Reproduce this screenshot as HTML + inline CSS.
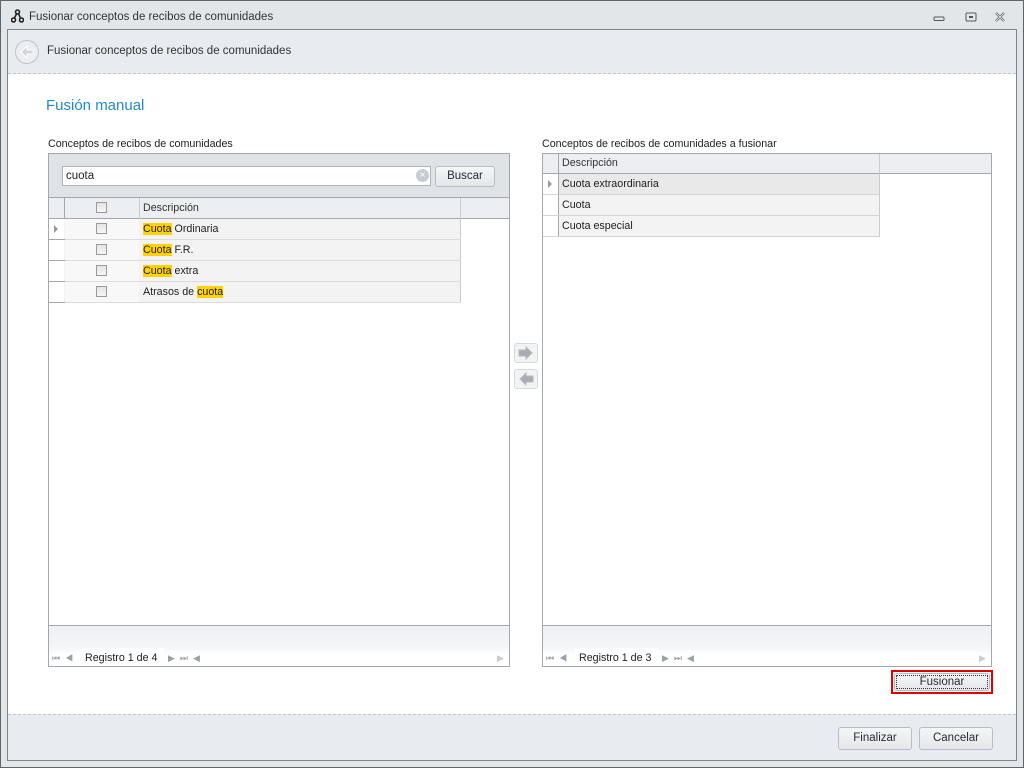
<!DOCTYPE html>
<html><head><meta charset="utf-8"><style>
*{margin:0;padding:0;box-sizing:border-box}
body{width:1024px;height:768px;position:relative;overflow:hidden;background:#e3e6e9;font-family:"Liberation Sans",sans-serif;font-size:10.7px;color:#1e1e1e}
.a{position:absolute}
.t{white-space:nowrap}
.hl{background:#ffd200}
.cb{position:absolute;width:11px;height:11px;border:1px solid #9a9a9a;background:linear-gradient(#e4e4e4,#f6f6f6)}
.btn{position:absolute;border:1px solid #b9bcc1;border-radius:3px;background:linear-gradient(#f5f6f7,#e4e6e9);text-align:center;color:#2a2a3a;font-size:11.5px}
.nav{color:#9aa0a8;font-size:9px}
</style></head><body>
<div class="a" style="left:0;top:0;width:1024px;height:768px;border:1px solid #5c646c"></div>
<svg class="a" style="left:11px;top:9px" width="13" height="14" viewBox="0 0 13 14"><circle cx="6.5" cy="3" r="2" fill="none" stroke="#222" stroke-width="1.6"/><circle cx="2.5" cy="11" r="2" fill="none" stroke="#222" stroke-width="1.6"/><circle cx="10.5" cy="11" r="2" fill="none" stroke="#222" stroke-width="1.6"/><path d="M5.5 4.8L3.5 9M7.5 4.8L9.5 9" stroke="#222" stroke-width="1.6"/></svg>
<div class="a t" style="left:29px;top:11px;font-size:11.5px;color:#333">Fusionar conceptos de recibos de comunidades</div>
<svg class="a" style="left:930px;top:12px" width="80" height="12"><rect x="4" y="5" width="10" height="3.5" rx="1" fill="none" stroke="#555"/><rect x="36" y="1" width="10" height="8" rx="1" fill="none" stroke="#555"/><rect x="39" y="4" width="4" height="2" fill="#555"/><path d="M66 1l8 8M74 1l-8 8" stroke="#555" stroke-width="2.2"/><path d="M66 1l8 8M74 1l-8 8" stroke="#fff" stroke-width="0.8"/></svg>
<div class="a" style="left:7px;top:29px;width:1010px;height:732px;border:1px solid #7e8489;background:#fff"></div>
<div class="a" style="left:8px;top:30px;width:1008px;height:44px;background:#e8ebef;border-bottom:1px dashed #c2c6cb"></div>
<svg class="a" style="left:14px;top:39px" width="26" height="26"><circle cx="13" cy="13" r="11.5" fill="#eceef1" stroke="#c0c4c9"/><path d="M7 13l6-6v4h6v4h-6v4z" fill="#d2d5d9" stroke="#fff" stroke-width="1"/></svg>
<div class="a t" style="left:47px;top:45px;font-size:11.5px;color:#333">Fusionar conceptos de recibos de comunidades</div>
<div class="a t" style="left:46px;top:97px;font-size:15px;color:#1e8bd0">Fusión manual</div>
<div class="a" style="left:8px;top:714px;width:1008px;height:46px;background:#e8ebef;border-top:1px dashed #c2c6cb"></div>

<div class="a t" style="left:48px;top:138px">Conceptos de recibos de comunidades</div>
<div class="a" style="left:48px;top:153px;width:462px;height:514px;border:1px solid #a4a8ae;background:#fff"></div>
<div class="a" style="left:49px;top:154px;width:460px;height:44px;background:#dfe2e6;border-bottom:1px solid #a4a8ae"></div>
<div class="a" style="left:62px;top:166px;width:369px;height:20px;border:1px solid #b0b4b9;background:#fff"></div>
<div class="a t" style="left:66px;top:170px;font-size:11.5px">cuota</div>
<div class="a" style="left:416px;top:169px;width:13px;height:13px;border-radius:50%;background:#c8cbcf;color:#fff;font-size:10px;line-height:13px;text-align:center">×</div>
<div class="btn" style="left:435px;top:166px;width:60px;height:21px;line-height:19px">Buscar</div>
<div class="a" style="left:49px;top:198px;width:460px;height:21px;background:#eceef1;border-bottom:1px solid #a4a8ae"></div>
<div class="a" style="left:64px;top:198px;width:1px;height:105px;background:#a4a8ae"></div>
<div class="a" style="left:139px;top:198px;width:1px;height:105px;background:#c8cbcf"></div>
<div class="a" style="left:460px;top:198px;width:1px;height:105px;background:#c8cbcf"></div>
<div class="cb" style="left:96px;top:202px"></div>
<div class="a t" style="left:143px;top:202px;color:#333">Descripción</div>
<div class="a" style="left:49px;top:219px;width:411px;height:84px;background:#f3f3f3"></div>
<div class="a" style="left:49px;top:239px;width:412px;height:1px;background:#dcdcdc"></div>
<div class="a" style="left:49px;top:260px;width:412px;height:1px;background:#dcdcdc"></div>
<div class="a" style="left:49px;top:281px;width:412px;height:1px;background:#dcdcdc"></div>
<div class="a" style="left:49px;top:302px;width:412px;height:1px;background:#dcdcdc"></div>
<div class="a" style="left:49px;top:219px;width:15px;height:84px;background:#fff"></div>
<div class="a" style="left:49px;top:239px;width:16px;height:1px;background:#a4a8ae"></div>
<div class="a" style="left:49px;top:260px;width:16px;height:1px;background:#a4a8ae"></div>
<div class="a" style="left:49px;top:281px;width:16px;height:1px;background:#a4a8ae"></div>
<div class="a" style="left:49px;top:302px;width:16px;height:1px;background:#a4a8ae"></div>
<div class="a" style="left:54px;top:225px;width:0;height:0;border-left:4px solid #999;border-top:4px solid transparent;border-bottom:4px solid transparent"></div>
<div class="a" style="left:65px;top:219px;width:74px;height:84px;background:#f8f8f8"></div>
<div class="a" style="left:65px;top:239px;width:74px;height:1px;background:#dcdcdc"></div>
<div class="a" style="left:65px;top:260px;width:74px;height:1px;background:#dcdcdc"></div>
<div class="a" style="left:65px;top:281px;width:74px;height:1px;background:#dcdcdc"></div>
<div class="a" style="left:65px;top:302px;width:74px;height:1px;background:#dcdcdc"></div>
<div class="cb" style="left:96px;top:223px"></div>
<div class="cb" style="left:96px;top:244px"></div>
<div class="cb" style="left:96px;top:265px"></div>
<div class="cb" style="left:96px;top:286px"></div>
<div class="a t" style="left:143px;top:223px"><span class="hl">Cuota</span> Ordinaria</div>
<div class="a t" style="left:143px;top:244px"><span class="hl">Cuota</span> F.R.</div>
<div class="a t" style="left:143px;top:265px"><span class="hl">Cuota</span> extra</div>
<div class="a t" style="left:143px;top:286px">Atrasos de <span class="hl">cuota</span></div>
<div class="a" style="left:49px;top:625px;width:460px;height:41px;border-top:1px solid #a4a8ae;background:linear-gradient(#eef0f3,#f5f6f8 55%,#fff 70%,#fff)"></div>
<div class="a t nav" style="left:52px;top:653px">⏮ &nbsp;◀</div>
<div class="a t" style="left:81px;top:648px;width:83px;height:18px;background:#fff;padding:4px 0 0 4px">Registro 1 de 4</div>
<div class="a t nav" style="left:168px;top:653px">▶ &nbsp;⏭ &nbsp;◀</div>
<div class="a t nav" style="left:497px;top:653px;color:#c8cbcf">▶</div>

<div class="a" style="left:514px;top:343px;width:24px;height:20px;border:1px solid #d6d9dc;border-radius:3px;background:#f2f3f5"></div>
<svg class="a" style="left:517px;top:346px" width="18" height="14"><path d="M2 4h7V1l6 6-6 6V10H2z" fill="#a8acb1" stroke="#b7babf"/></svg>
<div class="a" style="left:514px;top:369px;width:24px;height:20px;border:1px solid #d6d9dc;border-radius:3px;background:#f2f3f5"></div>
<svg class="a" style="left:517px;top:372px" width="18" height="14"><path d="M16 4H9V1L3 7l6 6V10h7z" fill="#a8acb1" stroke="#b7babf"/></svg>

<div class="a t" style="left:542px;top:138px">Conceptos de recibos de comunidades a fusionar</div>
<div class="a" style="left:542px;top:153px;width:450px;height:514px;border:1px solid #a4a8ae;background:#fff"></div>
<div class="a" style="left:543px;top:154px;width:448px;height:20px;background:#eceef1;border-bottom:1px solid #a4a8ae"></div>
<div class="a" style="left:558px;top:154px;width:1px;height:83px;background:#a4a8ae"></div>
<div class="a" style="left:879px;top:154px;width:1px;height:83px;background:#c8cbcf"></div>
<div class="a t" style="left:562px;top:157px;color:#333">Descripción</div>
<div class="a" style="left:559px;top:174px;width:320px;height:21px;background:#e9e9e9"></div>
<div class="a" style="left:559px;top:195px;width:320px;height:42px;background:#f3f3f3"></div>
<div class="a" style="left:543px;top:194px;width:337px;height:1px;background:#d4d4d4"></div>
<div class="a" style="left:543px;top:215px;width:337px;height:1px;background:#d4d4d4"></div>
<div class="a" style="left:543px;top:236px;width:337px;height:1px;background:#d4d4d4"></div>
<div class="a" style="left:548px;top:180px;width:0;height:0;border-left:4px solid #999;border-top:4px solid transparent;border-bottom:4px solid transparent"></div>
<div class="a t" style="left:562px;top:178px">Cuota extraordinaria</div>
<div class="a t" style="left:562px;top:199px">Cuota</div>
<div class="a t" style="left:562px;top:220px">Cuota especial</div>
<div class="a" style="left:543px;top:625px;width:448px;height:41px;border-top:1px solid #a4a8ae;background:linear-gradient(#eef0f3,#f5f6f8 55%,#fff 70%,#fff)"></div>
<div class="a t nav" style="left:546px;top:653px">⏮ &nbsp;◀</div>
<div class="a t" style="left:575px;top:648px;width:83px;height:18px;background:#fff;padding:4px 0 0 4px">Registro 1 de 3</div>
<div class="a t nav" style="left:662px;top:653px">▶ &nbsp;⏭ &nbsp;◀</div>
<div class="a t nav" style="left:979px;top:653px;color:#c8cbcf">▶</div>

<div class="a" style="left:891px;top:670px;width:102px;height:24px;border:2px solid #e00000"></div>
<div class="btn" style="left:894px;top:673px;width:96px;height:18px;line-height:16px;outline:1px dotted #333;outline-offset:-3px">Fusionar</div>
<div class="btn" style="left:838px;top:727px;width:74px;height:23px;line-height:21px">Finalizar</div>
<div class="btn" style="left:919px;top:727px;width:74px;height:23px;line-height:21px">Cancelar</div>
</body></html>
